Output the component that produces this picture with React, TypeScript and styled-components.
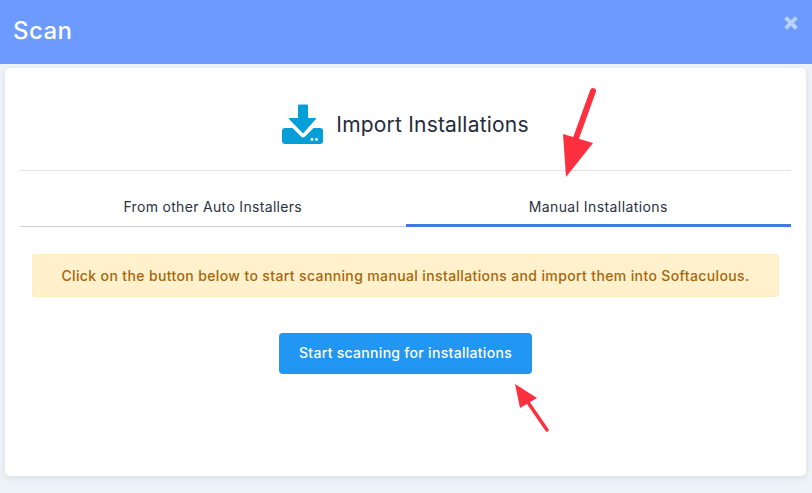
import React from "react";
import styled, { createGlobalStyle } from "styled-components";

const Global = createGlobalStyle`
  html, body { margin: 0; padding: 0; background: #eef3f8; }
  body { font-family: "Inter", "Noto Sans", "Liberation Sans", sans-serif; width: 812px; height: 493px; overflow: hidden; }
`;
const Page = styled.div`
  position: relative;
  width: 812px;
  height: 493px;
`;
const Header = styled.header`
  height: 64px;
  background: #6c9aff;
  display: flex;
  align-items: center;
  justify-content: space-between;
  padding: 0 14px 4px 13px;
  box-sizing: border-box;
`;
const Title = styled.h1`
  margin: 0;
  font-size: 24px;
  font-weight: 500;
  letter-spacing: 0.4px;
  color: #fff;
`;
const Close = styled.button`
  border: 0;
  padding: 0;
  background: none;
  display: flex;
  margin-bottom: 14px;
`;
const Card = styled.main`
  margin: 4px 6px 0 5px;
  height: 408px;
  box-sizing: border-box;
  background: #fff;
  border-radius: 5px;
  box-shadow: 0 2px 6px rgba(120, 130, 140, 0.18);
  padding: 0 15px;
`;
const Heading = styled.div`
  height: 103px;
  border-bottom: 1px solid #e1e3e6;
  display: flex;
  align-items: center;
  justify-content: center;
  gap: 13px;
  padding-top: 10px;
  box-sizing: border-box;
`;
const HeadingIcon = styled.svg`
  margin-bottom: 1px;
`;
const HeadingText = styled.h2`
  margin: 0;
  font-size: 21px;
  font-weight: 400;
  letter-spacing: 0.2px;
  color: #252b3b;
`;
const Tabs = styled.nav`
  display: flex;
  height: 56px;
`;
const Tab = styled.div<{ $active?: boolean }>`
  flex: 1;
  height: 56px;
  padding-top: 27px;
  box-sizing: border-box;
  text-align: center;
  font-size: 14px;
  line-height: 17px;
  letter-spacing: ${(p) => (p.$active ? "0.42px" : "0.32px")};
  font-weight: 400;
  color: #2c3140;
  border-bottom: ${(p) => (p.$active ? "3px solid #3f7be0" : "1px solid #ccd0d6")};
`;
const Alert = styled.div`
  margin: 27px 12px 0;
  height: 43px;
  box-sizing: border-box;
  background: #fff1cb;
  border: 1px solid #ffeec2;
  border-radius: 3px;
  display: flex;
  align-items: center;
  justify-content: center;
  font-size: 14px;
  letter-spacing: 0.37px;
  font-weight: 500;
  color: #a8650a;
  white-space: nowrap;
`;
const Actions = styled.div`
  display: flex;
  justify-content: center;
  margin-top: 36px;
`;
const Primary = styled.button`
  width: 253px;
  height: 41px;
  border: 0;
  border-radius: 4px;
  padding: 0 0 2px;
  background: #2196f3;
  color: #fff;
  font-family: inherit;
  font-size: 14px;
  letter-spacing: 0.3px;
  font-weight: 500;
`;
const Overlay = styled.svg`
  position: absolute;
  inset: 0;
  pointer-events: none;
`;

export default function App() {
  return (
    <Page>
      <Global />
      <Header>
        <Title>Scan</Title>
        <Close aria-label="Close">
          <svg width="14" height="14" viewBox="0 0 14 14">
            <path d="M3 3 L11 11 M11 3 L3 11" stroke="#b4d2fb" strokeWidth="4" strokeLinecap="square" />
          </svg>
        </Close>
      </Header>
      <Card>
        <Heading>
          <HeadingIcon width="41" height="40" viewBox="0 0 41 40">
            <path fill="#069ed6" d="M16 1.5a1 1 0 0 1 1-1h8a1 1 0 0 1 1 1V14h7.5a.6.6 0 0 1 .4 1L21 29.5 7 15a.6.6 0 0 1 .4-1H16Z" />
            <path fill="#069ed6" fillRule="evenodd" d="M3 24h7.5l8.5 8.5a3 3 0 0 0 4 0L31.5 24H38a3 3 0 0 1 3 3v10a3 3 0 0 1-3 3H3a3 3 0 0 1-3-3V27a3 3 0 0 1 3-3Z" />
            <circle cx="30" cy="35.5" r="1.4" fill="#fff" />
            <circle cx="34.5" cy="35.5" r="1.4" fill="#fff" />
          </HeadingIcon>
          <HeadingText>Import Installations</HeadingText>
        </Heading>
        <Tabs>
          <Tab>From other Auto Installers</Tab>
          <Tab $active>Manual Installations</Tab>
        </Tabs>
        <Alert>Click on the button below to start scanning manual installations and import them into Softaculous.</Alert>
        <Actions>
          <Primary>Start scanning for installations</Primary>
        </Actions>
      </Card>
      <Overlay width="812" height="493" viewBox="0 0 812 493">
        <path d="M593 91 L575 141" stroke="#fd3040" strokeWidth="6" strokeLinecap="round" />
        <path d="M563 134 L593 143 L566 177 Z" fill="#fd3040" />
        <path d="M547 430 L527 401" stroke="#fd3040" strokeWidth="3.5" strokeLinecap="round" />
        <path d="M515 384 L537 398 L520 408 Z" fill="#fd3040" />
      </Overlay>
    </Page>
  );
}
